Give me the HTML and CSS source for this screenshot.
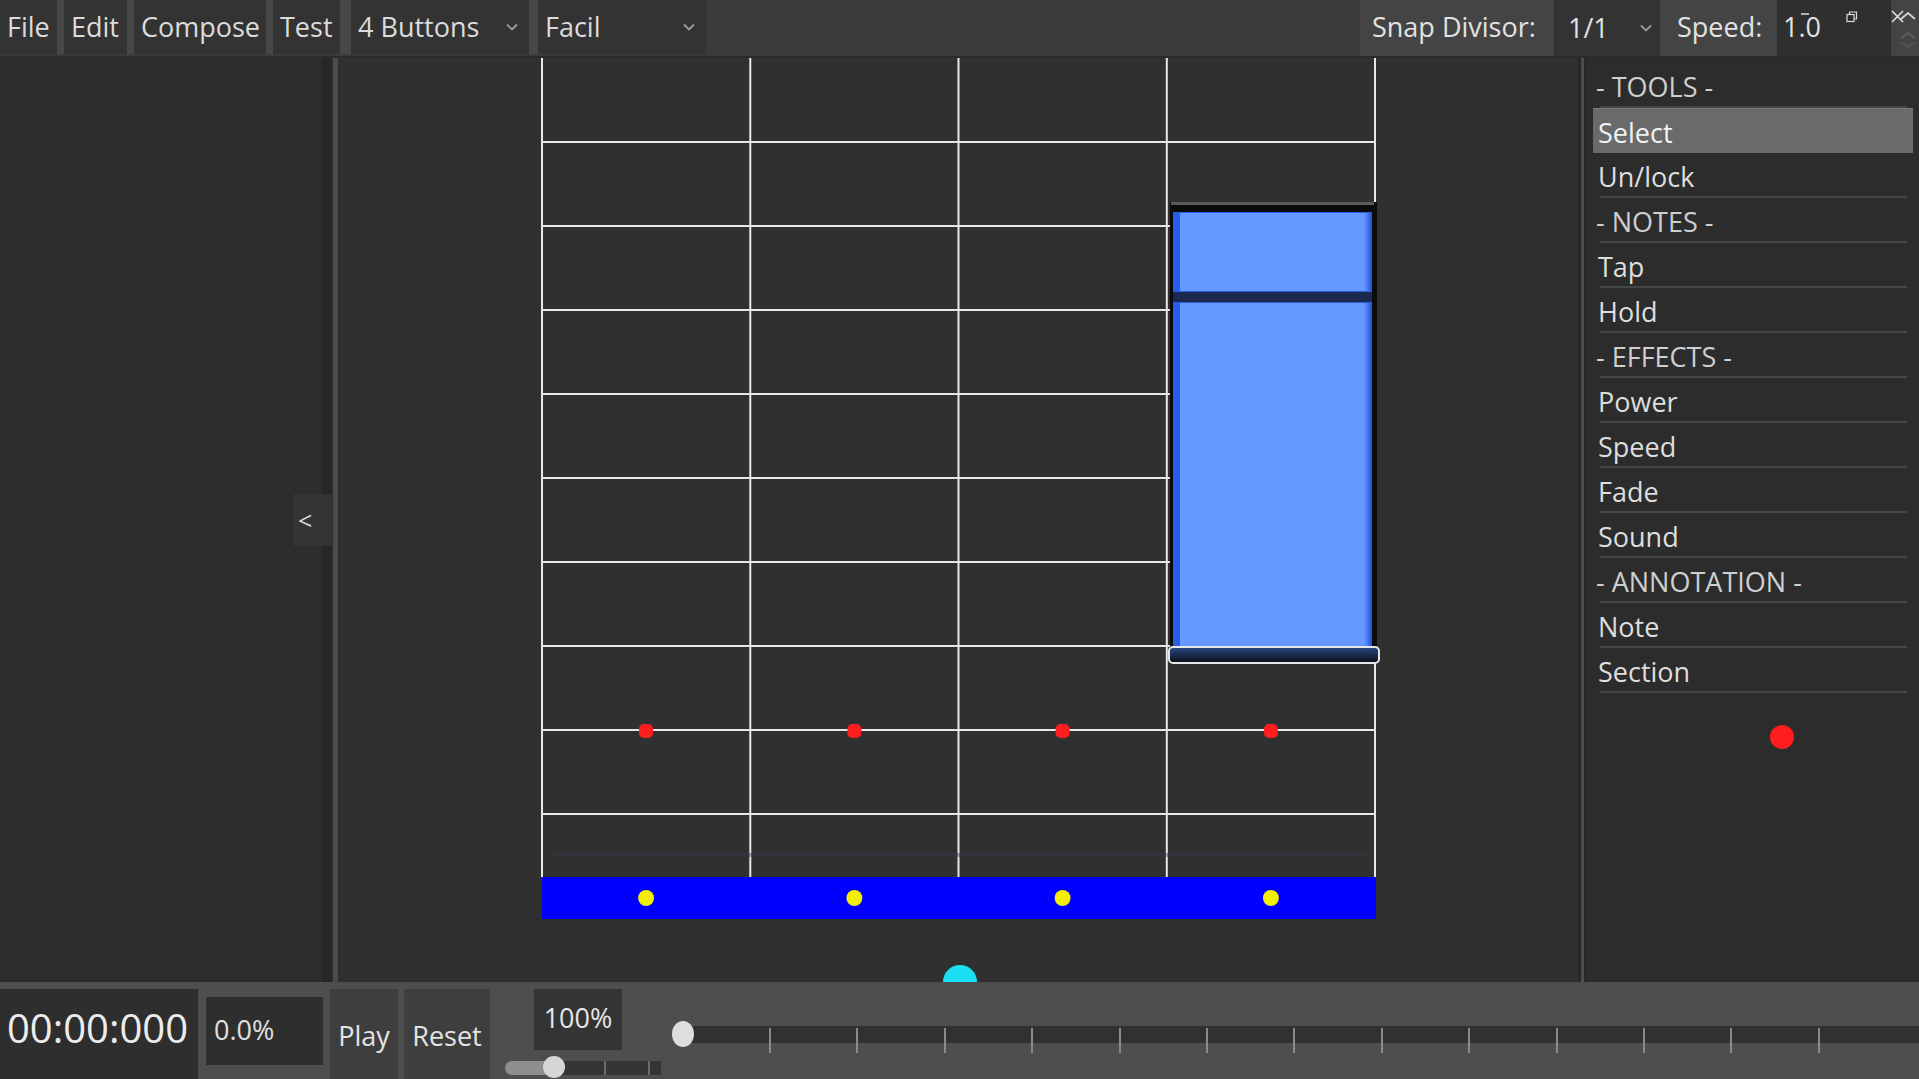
FILE: index.html
```html
<!DOCTYPE html>
<html lang="en">
<head>
<meta charset="utf-8">
<title>Chart Editor</title>
<link rel="stylesheet" href="styles.css">
</head>
<body>
<div class="app">
  <header class="topbar">
    <nav class="menu">
      <div class="mbtn w-file">File</div>
      <div class="mbtn w-edit">Edit</div>
      <div class="mbtn w-compose">Compose</div>
      <div class="mbtn w-test">Test</div>
      <div class="mbtn w-buttons"><span>4 Buttons</span><svg class="chev" width="12" height="8" viewBox="0 0 12 8"><path d="M1 1.5 L6 6.5 L11 1.5" fill="none" stroke="#9c9c9c" stroke-width="1.8"/></svg></div>
      <div class="mbtn w-facil"><span>Facil</span><svg class="chev" width="12" height="8" viewBox="0 0 12 8"><path d="M1 1.5 L6 6.5 L11 1.5" fill="none" stroke="#9c9c9c" stroke-width="1.8"/></svg></div>
    </nav>
    <div class="topright">
      <span class="lbl lbl-snap">Snap Divisor:</span>
      <div class="snapbox"><span>1/1</span><svg class="chev" width="12" height="8" viewBox="0 0 12 8"><path d="M1 1.5 L6 6.5 L11 1.5" fill="none" stroke="#9c9c9c" stroke-width="1.8"/></svg></div>
      <span class="lbl lbl-speed">Speed:</span>
      <div class="speedbox">1.0</div>
    </div>
    <svg class="winctl" width="130" height="50" viewBox="0 0 130 50">
      <line x1="12" y1="14" x2="20" y2="14" stroke="#dcdcdc" stroke-width="1.5"/>
      <rect x="58" y="14.5" width="7" height="7" fill="none" stroke="#dcdcdc" stroke-width="1.2"/>
      <path d="M60.5 14.5 V12 H67.5 V19 H65" fill="none" stroke="#dcdcdc" stroke-width="1.2"/>
      <path d="M103 11 L114 22 M114 11 L103 22" stroke="#e4e4e4" stroke-width="1.5"/>
      <path d="M112 19 L119 13 L126 19" fill="none" stroke="#d0d0d0" stroke-width="2"/>
      <path d="M112 38 L119 33 L126 38" fill="none" stroke="#5c5c5c" stroke-width="2"/>
      <path d="M112 42 L119 47 L126 42" fill="none" stroke="#555" stroke-width="2"/>
    </svg>
  </header>

  <main class="middle">
    <section class="lpanel">
      <div class="collapse">&lt;</div>
    </section>
    <div class="splitter"></div>
    <section class="stage">
      <svg class="chart" width="1238" height="924" viewBox="340 58 1238 924">
        <defs>
          <linearGradient id="tailg" x1="0" y1="0" x2="0" y2="1">
            <stop offset="0" stop-color="#2b4a86"/>
            <stop offset="1" stop-color="#080c16"/>
          </linearGradient>
          <linearGradient id="edgeR" x1="0" y1="0" x2="1" y2="0">
            <stop offset="0" stop-color="#6699ff"/>
            <stop offset="1" stop-color="#1f4fd8"/>
          </linearGradient>
        </defs>
        <g stroke="#e8e8e8" stroke-width="2">
          <line x1="542" y1="58" x2="542" y2="877"/>
          <line x1="750.3" y1="58" x2="750.3" y2="877"/>
          <line x1="958.5" y1="58" x2="958.5" y2="877"/>
          <line x1="1166.8" y1="58" x2="1166.8" y2="877"/>
          <line x1="1375" y1="58" x2="1375" y2="877"/>
          <line x1="541" y1="142" x2="1376" y2="142"/>
          <line x1="541" y1="226" x2="1376" y2="226"/>
          <line x1="541" y1="310" x2="1376" y2="310"/>
          <line x1="541" y1="394" x2="1376" y2="394"/>
          <line x1="541" y1="478" x2="1376" y2="478"/>
          <line x1="541" y1="562" x2="1376" y2="562"/>
          <line x1="541" y1="646" x2="1376" y2="646"/>
          <line x1="541" y1="730" x2="1376" y2="730"/>
          <line x1="541" y1="814" x2="1376" y2="814"/>
        </g>
        <rect x="552" y="853" width="814" height="4" fill="#38384e" opacity="0.45"/>
        <rect x="542" y="877" width="834" height="42" fill="#0000ff"/>
        <g fill="#f4ee00">
          <circle cx="646.1" cy="898" r="8"/>
          <circle cx="854.4" cy="898" r="8"/>
          <circle cx="1062.6" cy="898" r="8"/>
          <circle cx="1270.9" cy="898" r="8"/>
        </g>
        <g fill="#ff1e1e">
          <rect x="639" y="724" width="14" height="14" rx="5"/>
          <rect x="847.4" y="724" width="14" height="14" rx="5"/>
          <rect x="1055.6" y="724" width="14" height="14" rx="5"/>
          <rect x="1263.9" y="724" width="14" height="14" rx="5"/>
        </g>
        <g class="hold">
          <rect x="1170" y="202" width="207" height="460" fill="#0b0b0b"/>
          <rect x="1171" y="202" width="203" height="3" fill="#5a5a5a"/>
          <rect x="1173" y="212" width="199" height="80" fill="#2a5de6"/>
          <rect x="1180" y="213" width="184" height="78" fill="#6699ff"/>
          <rect x="1364" y="213" width="8" height="78" fill="url(#edgeR)"/>
          <rect x="1173" y="292" width="199" height="10" fill="#1c2850"/>
          <rect x="1173" y="302" width="199" height="344" fill="#2a5de6"/>
          <rect x="1180" y="303" width="184" height="343" fill="#6699ff"/>
          <rect x="1364" y="303" width="8" height="343" fill="url(#edgeR)"/>
          <rect x="1169" y="647" width="210" height="16" rx="4" fill="url(#tailg)" stroke="#e6e6e6" stroke-width="2"/>
        </g>
        <path d="M943 982 A17 17 0 0 1 977 982 Z" fill="#1ae0f2"/>
      </svg>
    </section>
    <div class="rsplit"></div>
    <aside class="rpanel">
      <div class="row hdr">- TOOLS -</div>
      <div class="row sel">Select</div>
      <div class="row">Un/lock</div>
      <div class="row hdr">- NOTES -</div>
      <div class="row">Tap</div>
      <div class="row">Hold</div>
      <div class="row hdr">- EFFECTS -</div>
      <div class="row">Power</div>
      <div class="row">Speed</div>
      <div class="row">Fade</div>
      <div class="row">Sound</div>
      <div class="row hdr">- ANNOTATION -</div>
      <div class="row">Note</div>
      <div class="row">Section</div>
      <span class="touch-dot"></span>
    </aside>
  </main>

  <footer class="bottombar">
    <div class="timer">00:00:000</div>
    <div class="pct">0.0%</div>
    <div class="bbtn play">Play</div>
    <div class="bbtn reset">Reset</div>
    <div class="zoomctl">
      <div class="zoomval">100%</div>
      <div class="zslider">
        <div class="zfill"></div>
        <div class="ztrack"><i></i><i></i></div>
        <div class="zknob"></div>
      </div>
    </div>
    <div class="timeline">
      <div class="ttrack">
        <i></i><i></i><i></i><i></i><i></i><i></i><i></i><i></i><i></i><i></i><i></i><i></i><i></i>
      </div>
      <div class="tknob"></div>
    </div>
  </footer>
</div>
</body>
</html>
```

FILE: styles.css
```css
html, body {
  margin: 0;
  padding: 0;
}

body {
  background: #2e2e2e;
  font-family: "Open Sans", "Noto Sans", sans-serif;
  font-weight: 500;
  color: #e0e0e0;
}

.app {
  width: 1919px;
  height: 1079px;
  display: flex;
  flex-direction: column;
  overflow: hidden;
}

/* ---------- top bar ---------- */
.topbar {
  height: 58px;
  flex: none;
  box-sizing: border-box;
  display: flex;
  align-items: flex-start;
  background: #3b3b3b;
  border-bottom: 2px solid #2b2b2b;
  position: relative;
}

.menu {
  display: flex;
  height: 54px;
  background: #474747;
}

.mbtn {
  height: 54px;
  box-sizing: border-box;
  background: #333333;
  font-size: 27px;
  line-height: 54px;
  padding-left: 7px;
  color: #dcdcdc;
  white-space: nowrap;
  display: flex;
  align-items: center;
  justify-content: space-between;
}

.mbtn + .mbtn { margin-left: 7px; }

.w-file { width: 57px; }
.w-edit { width: 63px; }
.w-compose { width: 132px; }
.w-test { width: 67px; }
.w-buttons { width: 178px; padding-right: 11px; }
.menu .w-buttons { margin-left: 11px; }
.w-facil { width: 168px; padding-right: 11px; }
.menu .w-facil { margin-left: 9px; }

.chev { flex: none; display: block; }

.topright {
  margin-left: auto;
  width: 559px;
  height: 56px;
  box-sizing: border-box;
  padding-left: 12px;
  display: flex;
  align-items: stretch;
  background: #444444;
}

.lbl {
  font-size: 27px;
  line-height: 54px;
  color: #e2e2e2;
  white-space: nowrap;
}

.lbl-snap { width: 182px; }
.lbl-speed { width: 100px; margin-left: 17px; }

.snapbox {
  width: 106px;
  box-sizing: border-box;
  background: #333333;
  padding: 0 8px 0 14px;
  font-size: 27px;
  line-height: 54px;
  display: flex;
  align-items: center;
  justify-content: space-between;
}

.speedbox {
  width: 114px;
  box-sizing: border-box;
  background: #2f2f2f;
  padding-left: 6px;
  font-size: 27px;
  line-height: 54px;
}

.winctl {
  position: absolute;
  top: 0;
  right: 0;
  display: block;
}

/* ---------- middle ---------- */
.middle {
  flex: 1;
  min-height: 0;
  display: flex;
}

.lpanel {
  width: 322px;
  flex: none;
  background: #2d2d2d;
  display: flex;
  align-items: center;
  justify-content: flex-end;
}

.collapse {
  width: 39px;
  height: 52px;
  flex: none;
  box-sizing: border-box;
  padding-left: 5px;
  margin-right: -10px;
  position: relative;
  z-index: 1;
  background: #343434;
  color: #d8d8d8;
  font-size: 25px;
  display: flex;
  align-items: center;
  justify-content: flex-start;
}

.splitter {
  width: 18px;
  flex: none;
  background: linear-gradient(to right,
    #262626 0 9px, #2d2d2d 9px 11px, #4b4b4b 11px 16px, #2d2d2d 16px 18px);
}

.stage {
  width: 1238px;
  flex: none;
  background: #303030;
}

.chart { display: block; }

.rsplit {
  width: 8px;
  flex: none;
  background: linear-gradient(to right,
    #262626 0 3px, #4d4d4d 3px 6px, #282828 6px 8px);
}

.rpanel {
  flex: 1;
  background: #2c2c2c;
  padding: 5px 6px 0 7px;
  position: relative;
}

.row {
  height: 45px;
  box-sizing: border-box;
  padding: 2px 0 0 5px;
  font-size: 27px;
  line-height: 43px;
  color: #dedede;
  position: relative;
  white-space: nowrap;
}

.row::after {
  content: "";
  position: absolute;
  left: 7px;
  right: 6px;
  bottom: 0;
  height: 2px;
  background: #464646;
}

.row.hdr {
  padding-left: 3px;
  color: #cfcfcf;
}

.row.sel {
  background: #6a6a6a;
  border-top: 1px solid #7a7a7a;
  color: #f2f2f2;
}

.row.sel::after { display: none; }

.touch-dot {
  position: absolute;
  left: 184px;
  top: 667px;
  width: 24px;
  height: 24px;
  border-radius: 50%;
  background: #ff1d1d;
}

/* ---------- bottom bar ---------- */
.bottombar {
  height: 97px;
  flex: none;
  background: #4e4e4e;
  display: flex;
  align-items: flex-start;
}

.timer {
  width: 198px;
  height: 90px;
  margin-top: 7px;
  box-sizing: border-box;
  padding-left: 7px;
  background: #2e2e2e;
  font-size: 40px;
  line-height: 78px;
  color: #ececec;
  white-space: nowrap;
}

.pct {
  width: 117px;
  height: 68px;
  margin: 15px 0 0 8px;
  box-sizing: border-box;
  padding-left: 8px;
  background: #2e2e2e;
  font-size: 27px;
  line-height: 66px;
  color: #e0e0e0;
}

.bbtn {
  height: 90px;
  margin-top: 7px;
  box-sizing: border-box;
  padding-top: 2px;
  background: #3e3e3e;
  font-size: 27px;
  color: #e4e4e4;
  display: flex;
  align-items: center;
  justify-content: center;
}

.play { width: 68px; margin-left: 7px; }
.reset { width: 86px; margin-left: 6px; }

.zoomctl {
  width: 165px;
  margin-left: 6px;
  display: flex;
  flex-direction: column;
}

.zoomval {
  width: 88px;
  height: 61px;
  margin: 7px 0 0 38px;
  background: #343434;
  font-size: 27px;
  line-height: 58px;
  text-align: center;
  color: #e6e6e6;
}

.zslider {
  margin-top: 8px;
  height: 19px;
  position: relative;
  display: flex;
  align-items: center;
}

.zfill {
  width: 49px;
  height: 14px;
  margin-left: 9px;
  background: #8e8e8e;
  border-radius: 7px 0 0 7px;
}

.ztrack {
  flex: 1;
  height: 14px;
  background: #353535;
  display: flex;
}

.ztrack i {
  width: 2px;
  height: 14px;
  background: #6c6c6c;
  margin-left: 50px;
}

.ztrack i + i { margin-left: 42px; }

.zknob {
  position: absolute;
  left: 47px;
  top: -2px;
  width: 22px;
  height: 22px;
  border-radius: 50%;
  background: #d6d6d6;
}

.timeline {
  flex: 1;
  height: 30px;
  margin-top: 44px;
  position: relative;
}

.ttrack {
  margin-left: 31px;
  height: 17px;
  box-sizing: border-box;
  padding-left: 77px;
  background: #313131;
  display: flex;
}

.ttrack i {
  flex: none;
  width: 2px;
  height: 25px;
  margin-top: 2px;
  margin-right: 85.4px;
  background: #8a8a8a;
}

.tknob {
  position: absolute;
  left: 11px;
  top: -5px;
  width: 22px;
  height: 26px;
  border-radius: 50%;
  background: #dedede;
}
```
